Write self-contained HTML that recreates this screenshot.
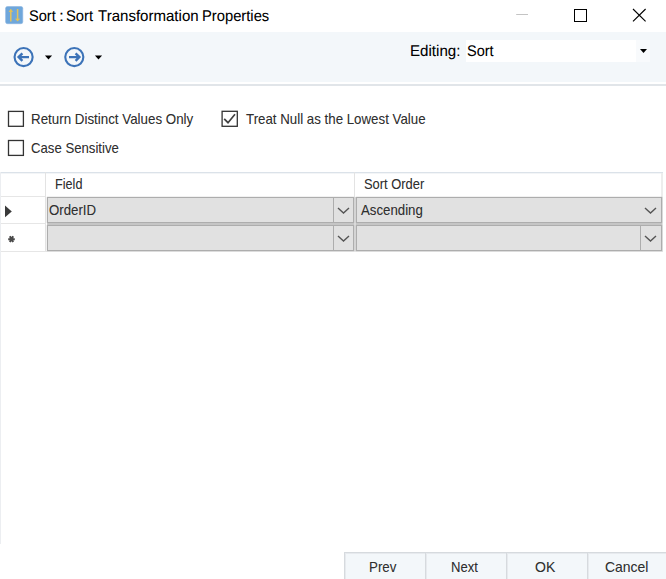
<!DOCTYPE html>
<html><head><meta charset="utf-8">
<style>
html,body{margin:0;padding:0;background:#fff;}
body{width:666px;height:579px;position:relative;overflow:hidden;font-family:"Liberation Sans",sans-serif;color:#000;}
.abs{position:absolute;}
#title{position:absolute;left:0;top:0;width:0;height:0;font-size:0;}
span.t{display:block;}
.t{position:absolute;white-space:nowrap;font-size:15px;line-height:16px;color:#303030;transform-origin:0 0;text-shadow:0 0 0.6px rgba(0,0,0,0.18);}
.t.s{font-size:15.5px;line-height:19px;color:#000;text-rendering:geometricPrecision;}
.t.h{font-size:15.5px;line-height:19px;color:#000;text-rendering:geometricPrecision;}
#toolbar{left:0;top:32px;width:666px;height:50px;background:#f3f7fa;}
#tbline{left:0;top:84px;width:666px;height:2px;background:#e1e5e9;}
.combo{position:absolute;background:#e1e1e1;border:1px solid #adadad;box-sizing:border-box;box-shadow:0 0 1px #adadad;}
.btn{position:absolute;top:552px;height:30px;box-sizing:border-box;background:#f3f7fa;border:1px solid #d6dade;box-shadow:inset 1px 1px 0 #e7eaee;}
</style></head><body>
<!-- title bar -->
<svg class="abs" style="left:5px;top:6px" width="19" height="19" viewBox="0 0 19 19">
<rect x="0.6" y="0.5" width="17.2" height="17.2" rx="1.8" fill="#6fa7db" stroke="#8db6e0" stroke-width="0.6"/>
<path d="M5.8 3.2V15.4M12.6 3V14.8" stroke="#e3c35c" stroke-width="1.5" fill="none"/>
<path d="M3.9 5.5L5.8 3.9L7.7 5.5ZM10.6 13L12.6 14.8L14.6 13Z" fill="#e9c34f" stroke="#e9c34f" stroke-width="0.6"/>
</svg>
<div id="title"><span class="t h" style="left:28.89px;top:7px;transform:scaleX(0.9418)">Sort</span> <span class="t h" style="left:58.55px;top:7px;transform:scaleX(1.1333)">:</span> <span class="t h" style="left:66.49px;top:7px;transform:scaleX(0.9527)">Sort</span> <span class="t h" style="left:97.86px;top:7px;transform:scaleX(0.9707)">Transformation</span> <span class="t h" style="left:202.01px;top:7px;transform:scaleX(0.9513)">Properties</span></div>
<svg class="abs" style="left:510px;top:0" width="156" height="32" viewBox="0 0 156 32">
<path d="M6.2 14.5H18" stroke="#c4c4c4" stroke-width="1"/>
<rect x="64.5" y="9.5" width="12" height="12" fill="none" stroke="#000" stroke-width="1"/>
<path d="M123 9L135.6 21.4M135.6 9L123 21.4" stroke="#000" stroke-width="1.15"/>
</svg>
<!-- toolbar -->
<div id="toolbar" class="abs"></div>
<div id="tbline" class="abs"></div>
<svg class="abs" style="left:10px;top:44px" width="100" height="26" viewBox="0 0 100 26">
<g fill="none" stroke="#3c73b8" stroke-width="2.1">
<circle cx="13.6" cy="13.1" r="9.05"/>
<circle cx="64.3" cy="13.1" r="9.05"/>
<path d="M8.6 13.1H19M12.4 9.3L8.6 13.1L12.4 16.9" stroke-width="2.4"/>
<path d="M59 13.1H69.4M65.6 9.3L69.4 13.1L65.6 16.9" stroke-width="2.4"/>
</g>
<path d="M34.9 11.6H42.1L38.5 15.6Z M84.9 11.6H92.1L88.5 15.6Z" fill="#000"/>
</svg>
<div class="t s" style="left:409.98px;top:42px;transform:scaleX(0.9755)">Editing:</div>
<div class="abs" style="left:466px;top:40px;width:184px;height:22px;background:#fff;"></div>
<div class="abs" style="left:636px;top:40px;width:14px;height:22px;background:#f8fafc;"></div>
<div class="t s" style="left:467.3px;top:42px;transform:scaleX(0.9345)">Sort</div>
<svg class="abs" style="left:638px;top:46px" width="12" height="10"><path d="M2 3H9L5.5 7Z" fill="#000"/></svg>
<!-- checkboxes -->
<svg class="abs" style="left:0;top:100px" width="260" height="64">
<g fill="#fff" stroke="#333" stroke-width="1.3">
<rect x="8.5" y="11.4" width="14.9" height="14.9"/>
<rect x="222.1" y="11.3" width="15.2" height="15"/>
<rect x="8.5" y="40.5" width="14.9" height="14.9"/>
</g>
<path d="M224.2 18.8L228 22.7L235 14.3" stroke="#404040" stroke-width="1.7" fill="none"/>
</svg>
<div class="t " style="left:30.99px;top:111px;transform:scaleX(0.8901)">Return Distinct Values Only</div>
<div class="t " style="left:245.78px;top:111px;transform:scaleX(0.8862)">Treat Null as the Lowest Value</div>
<div class="t " style="left:30.84px;top:140px;transform:scaleX(0.8782)">Case Sensitive</div>
<!-- grid -->
<div class="abs" style="left:0;top:172px;width:663px;height:1px;background:#dbe2e9;"></div>
<div class="abs" style="left:0;top:173px;width:663px;height:1px;background:#f3f5f7;"></div>
<div class="abs" style="left:0;top:196px;width:46px;height:1px;background:#e6e6e6;"></div>
<div class="abs" style="left:0;top:223px;width:46px;height:1px;background:#e6e6e6;"></div>
<div class="abs" style="left:0;top:251px;width:662px;height:1px;background:#e6e6e6;"></div>
<div class="abs" style="left:45px;top:172px;width:1px;height:79px;background:#e3e3e3;"></div>
<div class="abs" style="left:354px;top:172px;width:1px;height:25px;background:#e3e3e3;"></div>
<div class="abs" style="left:661px;top:173px;width:2px;height:24px;background:#ededed;"></div><div class="abs" style="left:662px;top:197px;width:1px;height:55px;background:#e3e3e3;"></div>
<div class="abs" style="left:0;top:172px;width:1px;height:372px;background:#eceef1;"></div>
<div class="abs" style="left:47px;top:222px;width:615px;height:4px;background:#cbcbcb;"></div>
<div class="abs" style="left:354px;top:197px;width:2px;height:54px;background:#dcdcdc;"></div>
<div class="t " style="left:54.85px;top:176px;transform:scaleX(0.843)">Field</div>
<div class="t " style="left:363.55px;top:176px;transform:scaleX(0.8609)">Sort Order</div>
<div class="combo" style="left:47px;top:197px;width:307px;height:26px"></div>
<div class="combo" style="left:47px;top:225px;width:307px;height:26px"></div>
<div class="combo" style="left:356px;top:197px;width:306px;height:26px"></div>
<div class="combo" style="left:356px;top:225px;width:306px;height:26px"></div>
<div class="abs" style="left:333px;top:197px;width:1px;height:26px;background:#adadad"></div>
<div class="abs" style="left:333px;top:225px;width:1px;height:26px;background:#adadad"></div>
<div class="abs" style="left:640px;top:225px;width:1px;height:26px;background:#adadad"></div>
<svg class="abs" style="left:0;top:172px" width="666" height="80">
<g fill="none" stroke="#555" stroke-width="1.4">
<path d="M338 36L343.5 41L349 36"/>
<path d="M338 64L343.5 69L349 64"/>
<path d="M645 36L650.5 41L656 36"/>
<path d="M645 64L650.5 69L656 64"/>
</g>
<path d="M5 33.6L11.8 39.4L5 45.2Z" fill="#3a3a3a"/>
<path d="M8.2 67.2H14.8M9.85 64.3L13.15 70.1M13.15 64.3L9.85 70.1" stroke="#4a4a4a" stroke-width="2" fill="none"/>
</svg>
<div class="t " style="left:48.94px;top:202px;transform:scaleX(0.8831)">OrderID</div>
<div class="t " style="left:360.5px;top:202px;transform:scaleX(0.8826)">Ascending</div>
<!-- buttons -->
<div class="btn" style="left:344px;width:82px"></div>
<div class="btn" style="left:425px;width:82px"></div>
<div class="btn" style="left:506px;width:82px"></div>
<div class="btn" style="left:587px;width:82px"></div>
<div class="t " style="left:369.49px;top:559px;transform:scaleX(0.8881)">Prev</div>
<div class="t " style="left:451.11px;top:559px;transform:scaleX(0.8712)">Next</div>
<div class="t " style="left:534.8px;top:559px;transform:scaleX(0.9349)">OK</div>
<div class="t " style="left:604.8px;top:559px;transform:scaleX(0.9311)">Cancel</div>
</body></html>
